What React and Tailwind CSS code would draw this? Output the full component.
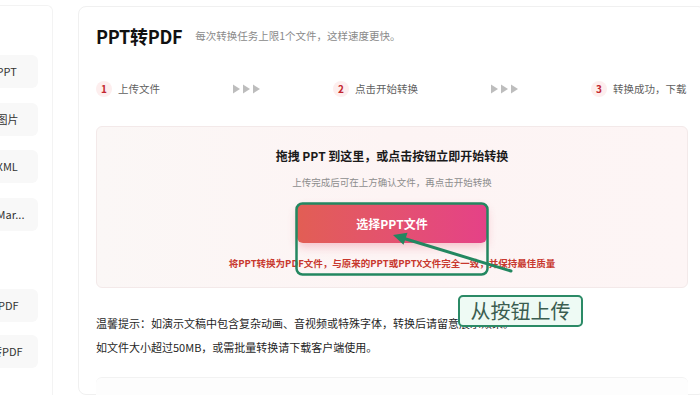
import React from "react";

const font = { fontFamily: '"Noto Sans CJK SC", "Noto Sans", sans-serif' };

function Arrows() {
  return (
    <svg width="27" height="10" viewBox="0 0 27 10">
      <polygon points="0,0.5 7,5 0,9.5" fill="#bdbdbd" />
      <polygon points="10,0.5 17,5 10,9.5" fill="#bdbdbd" />
      <polygon points="20,0.5 27,5 20,9.5" fill="#bdbdbd" />
    </svg>
  );
}

function Step({ n, text }) {
  return (
    <div className="flex items-center gap-[6px]">
      <div className="w-[16px] h-[16px] rounded-full bg-[#fdeeee] flex items-center justify-center text-[10px] font-bold text-[#c3262f] leading-none">
        {n}
      </div>
      <span className="text-[10.5px] text-[#5f5f5f] leading-[20px] whitespace-nowrap">{text}</span>
    </div>
  );
}

function SideItem({ label }) {
  return (
    <div className="h-[33px] rounded-[6px] bg-[#f8f8f8] flex items-center pl-[15px] text-[11px] text-[#333] whitespace-nowrap">
      {label}
    </div>
  );
}

export default function App() {
  return (
    <div className="relative w-[700px] h-[395px] overflow-hidden bg-white flex" style={font}>
      {/* Sidebar */}
      <div className="mt-[5px] w-[53px] shrink-0 border-t border-r border-[#f3f3f3] rounded-tr-[6px] overflow-hidden">
        <div className="ml-[-50px] w-[88px] pt-[49px] flex flex-col">
          <div className="flex flex-col gap-[14.5px]">
            <SideItem label="PDF转PPT" />
            <SideItem label="PDF转图片" />
            <SideItem label="PDF转XML" />
            <SideItem label="PDF转Mar..." />
          </div>
          <div className="mt-[58px] flex flex-col gap-[13px]">
            <SideItem label="图片转PDF" />
            <SideItem label="Excel转PDF" />
          </div>
        </div>
      </div>

      {/* Main card */}
      <div className="ml-[25px] mt-[6px] w-[628px] shrink-0 border border-[#f0f0f0] rounded-[8px] px-[17px] pt-[17px]">
        <div className="flex items-center h-[24px]">
          <span className="text-[18px] font-bold text-[#111] leading-[24px] tracking-[-0.3px]">PPT转PDF</span>
          <span className="ml-[13px] text-[10.5px] text-[#8a8a8a] leading-[24px]">每次转换任务上限1个文件，这样速度更快。</span>
        </div>

        <div className="mt-[31px] h-[20px] flex items-center gap-[73px]">
          <Step n="1" text="上传文件" />
          <Arrows />
          <Step n="2" text="点击开始转换" />
          <Arrows />
          <Step n="3" text="转换成功，下载" />
        </div>

        <div className="mt-[27px] h-[162px] rounded-[6px] border border-[#f3e9e9] bg-gradient-to-r from-[#fbf7f6] via-[#fdf4f4] to-[#fdf5f5] flex flex-col items-center pt-[20px]">
          <div className="text-[12px] font-bold text-[#1a1a1a] leading-[18px]">拖拽 PPT 到这里，或点击按钮立即开始转换</div>
          <div className="mt-[10px] text-[9.5px] text-[#8d8d8d] leading-[14px]">上传完成后可在上方确认文件，再点击开始转换</div>
          <div className="mt-[15px] w-[190px] h-[39px] rounded-[6px] bg-gradient-to-r from-[#e25e54] to-[#e54187] shadow-[0_4px_10px_rgba(229,80,110,0.3)] flex items-center justify-center text-white text-[12px] font-bold">
            选择PPT文件
          </div>
          <div className="mt-[13px] text-[9.5px] font-semibold text-[#c8382e] leading-[14px] whitespace-nowrap">
            将PPT转换为PDF文件，与原来的PPT或PPTX文件完全一致，并保持最佳质量
          </div>
        </div>

        <div className="mt-[23px] text-[11px] text-[#1f1f1f] leading-[24px]">
          <div className="whitespace-nowrap">温馨提示：如演示文稿中包含复杂动画、音视频或特殊字体，转换后请留意展示效果。</div>
          <div className="whitespace-nowrap">如文件大小超过50MB，或需批量转换请下载客户端使用。</div>
        </div>

        <div className="mt-[18px] h-[40px] rounded-t-[6px] border-t border-[#f2f2f2] bg-[#fdfdfd]" />
      </div>

      {/* Annotation overlay */}
      <svg className="absolute inset-0 pointer-events-none" width="700" height="395" viewBox="0 0 700 395">
        <rect x="296.5" y="203.5" width="191" height="71" rx="6" fill="none" stroke="#238760" strokeWidth="2.5" />
        <line x1="511" y1="271" x2="405" y2="238.8" stroke="#238760" strokeWidth="3" strokeLinecap="round" />
        <polygon points="393,235 407.5,232.8 403.5,244.8" fill="#238760" />
      </svg>
      <div className="absolute left-[458px] top-[295px] w-[125px] h-[32px] rounded-[5px] border-2 border-[#2b8a66] bg-[#eefaf4] flex items-center justify-center text-[20px] text-[#3b5d50] leading-none">
        从按钮上传
      </div>
    </div>
  );
}
